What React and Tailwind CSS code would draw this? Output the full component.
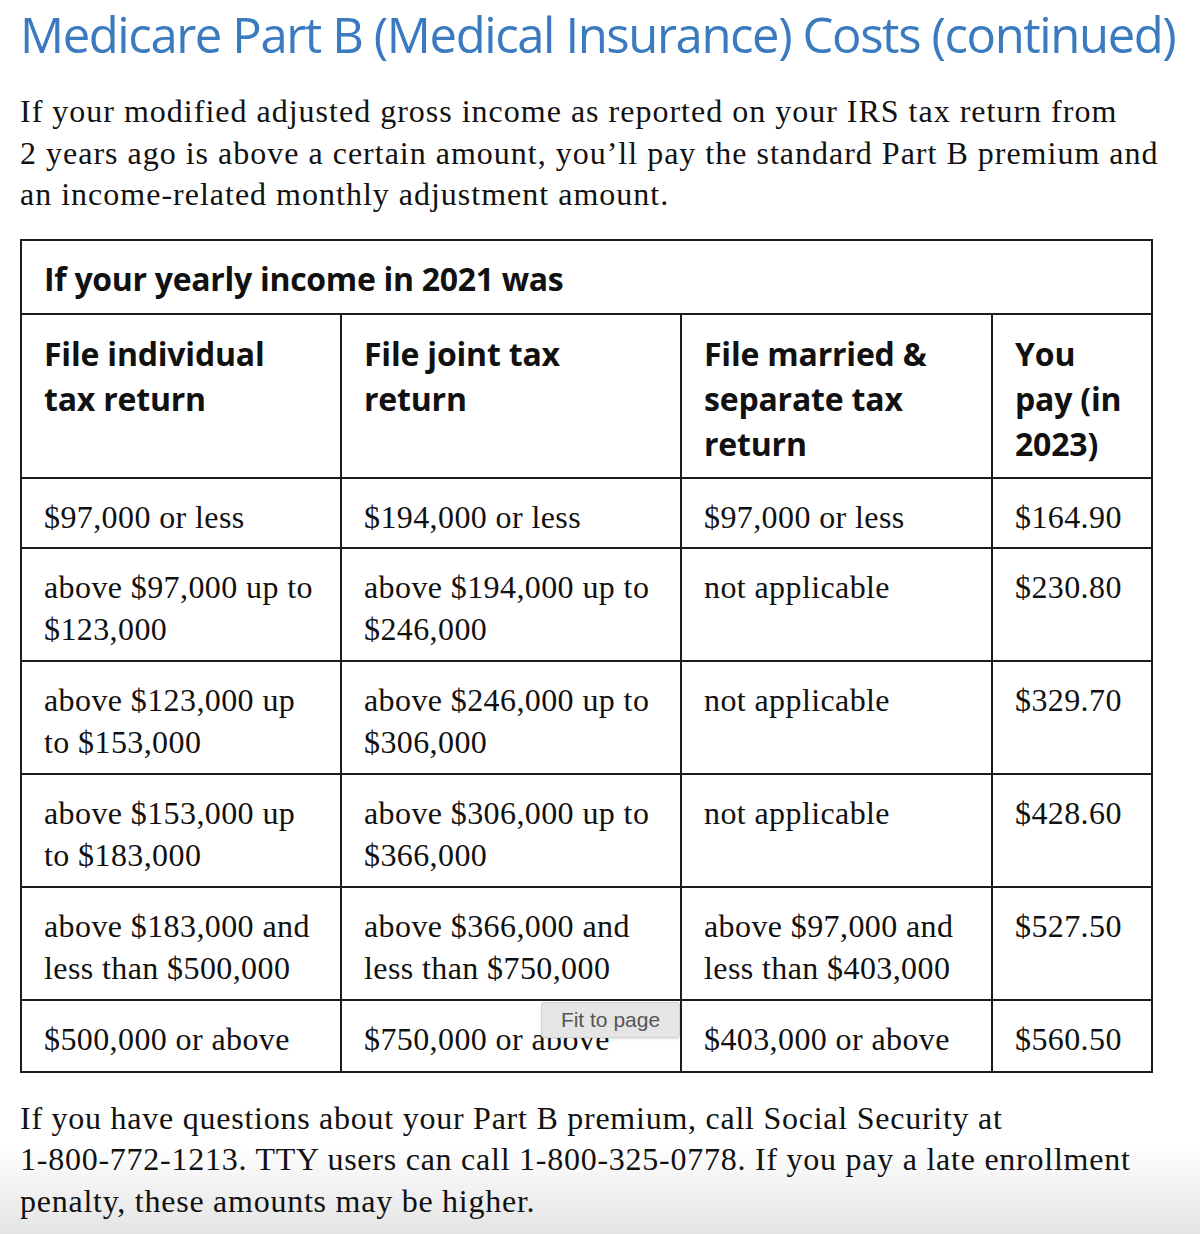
import React from 'react';

const serif = { fontFamily: '"Liberation Serif", "Times New Roman", serif' };
const sans = { fontFamily: '"Open Sans", "Noto Sans", Arial, sans-serif' };

const rows = [
  { h: 'h-[70px]', cells: ['$97,000 or less', '$194,000 or less', '$97,000 or less', '$164.90'] },
  { h: 'h-[113px]', cells: ['above $97,000 up to $123,000', 'above $194,000 up to $246,000', 'not applicable', '$230.80'] },
  { h: 'h-[113px]', cells: ['above $123,000 up to $153,000', 'above $246,000 up to $306,000', 'not applicable', '$329.70'] },
  { h: 'h-[113px]', cells: ['above $153,000 up to $183,000', 'above $306,000 up to $366,000', 'not applicable', '$428.60'] },
  { h: 'h-[113px]', cells: ['above $183,000 and less than $500,000', 'above $366,000 and less than $750,000', 'above $97,000 and less than $403,000', '$527.50'] },
  { h: 'h-[72px]', cells: ['$500,000 or above', '$750,000 or above', '$403,000 or above', '$560.50'] },
];

const headers = ['File individual tax return', 'File joint tax return', 'File married & separate tax return', 'You pay (in 2023)'];

export default function App() {
  return (
    <div className="relative w-[1200px] h-[1234px] overflow-hidden bg-white text-[#111]">
      {/* viewer bottom fade, sits behind the page text */}
      <div className="absolute left-0 right-0 bottom-0 h-[90px] bg-gradient-to-b from-white to-[#e4e4e4]" />

      <div className="relative px-5 pt-[3px]">
        <h1 className="text-[49px] leading-[62px] text-[#3a7bbf] tracking-[-1.4px] whitespace-nowrap" style={sans}>
          Medicare Part B (Medical Insurance) Costs (continued)
        </h1>
        <p className="mt-[26px] text-[32px] leading-[41.5px] tracking-[1px] whitespace-nowrap" style={serif}>
          If your modified adjusted gross income as reported on your IRS tax return from<br />
          2 years ago is above a certain amount, you’ll pay the standard Part B premium and<br />
          an income-related monthly adjustment amount.
        </p>

        <table className="mt-[23px] w-[1131px] table-fixed border-collapse border-[2.5px] border-[#1c1c1c]">
          <colgroup>
            <col className="w-[320px]" />
            <col className="w-[340px]" />
            <col className="w-[311px]" />
            <col className="w-[160px]" />
          </colgroup>
          <thead>
            <tr className="h-[74px]">
              <th colSpan={4} className="border-[2.5px] border-[#1c1c1c] px-[22px] pt-[4px] text-left align-middle text-[32px] font-bold tracking-[-0.3px]" style={sans}>
                If your yearly income in 2021 was
              </th>
            </tr>
            <tr className="h-[164px]">
              {headers.map((h) => (
                <th key={h} className="border-[2.5px] border-[#1c1c1c] px-[22px] pt-[16px] text-left align-top text-[32px] leading-[45px] font-bold tracking-[-0.2px]" style={sans}>
                  {h}
                </th>
              ))}
            </tr>
          </thead>
          <tbody>
            {rows.map((r, i) => (
              <tr key={i} className={r.h}>
                {r.cells.map((c, j) => (
                  <td key={j} className="border-[2.5px] border-[#1c1c1c] px-[22px] pt-[17px] align-top text-[32px] leading-[42px] tracking-[0.4px]" style={serif}>
                    {c}
                  </td>
                ))}
              </tr>
            ))}
          </tbody>
        </table>

        <p className="mt-[25px] text-[32px] leading-[41.5px] tracking-[0.75px] whitespace-nowrap" style={serif}>
          If you have questions about your Part B premium, call Social Security at<br />
          1-800-772-1213. TTY users can call 1-800-325-0778. If you pay a late enrollment<br />
          penalty, these amounts may be higher.
        </p>
      </div>

      {/* viewer tooltip */}
      <div
        className="absolute left-[541px] top-[1002px] w-[139px] h-[36px] flex items-center justify-center bg-[#e5e5e5] border border-[#d2d2d2] rounded-[3px] shadow-sm text-[21px] text-[#555]"
        style={{ fontFamily: '"Liberation Sans", Arial, sans-serif' }}
      >
        Fit to page
      </div>
    </div>
  );
}
